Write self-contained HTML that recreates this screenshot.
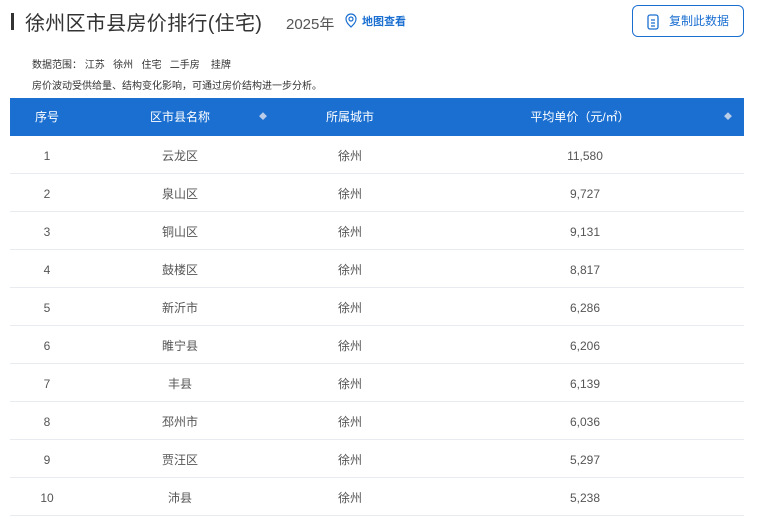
<!DOCTYPE html>
<html><head><meta charset="utf-8"><style>
*{margin:0;padding:0;box-sizing:border-box}
body{width:761px;height:531px;background:#fff;font-family:"Liberation Sans","Noto Sans CJK SC",sans-serif;position:relative;overflow:hidden;color:#333}
.bar{position:absolute;left:11px;top:13px;width:3px;height:17px;background:#333}
.title{position:absolute;left:25px;top:7px;font-size:20px;color:#333;white-space:nowrap;letter-spacing:0.3px}
.year{position:absolute;left:286px;top:13px;font-size:15px;color:#555}
.map{position:absolute;left:343px;top:13px;font-size:11px;color:#1a6fd1;font-weight:bold}
.map svg{vertical-align:-4px;margin-right:3px}
.copy{position:absolute;left:632px;top:5px;width:112px;height:32px;border:1px solid #1a6fd1;border-radius:6px;font-size:12px;color:#1a6fd1;line-height:30px;padding-left:36px}
.copy svg{position:absolute;left:12px;top:7px}
.info{position:absolute;left:32px;font-size:10px;color:#333;white-space:nowrap}
.hdr{position:absolute;left:10px;top:98px;width:734px;height:38px;background:#1a6fd1;color:#fff;font-size:12px}
.hdr span,.row span{position:absolute;top:0;transform:translateX(-50%);white-space:nowrap}
.hdr span{line-height:38px}
.row{position:absolute;left:10px;width:734px;height:38px;border-bottom:1px solid #e8ebef;font-size:12px;color:#555}
.row span{line-height:40px}
.sort{font-size:8px;color:#b9cde8}
</style></head><body>
<div class="bar"></div>
<div class="title">徐州区市县房价排行(住宅)</div>
<div class="year">2025年</div>
<div class="map"><svg width="16" height="16" viewBox="0 0 16 16" fill="none" stroke="#1a6fd1" stroke-width="1.2"><path d="M8 14c-3-3-5-5-5-8a5 5 0 0 1 10 0c0 3-2 5-5 8z"/><circle cx="8" cy="6" r="2"/></svg>地图查看</div>
<div class="copy"><svg width="16" height="18" viewBox="0 0 16 18" fill="none" stroke="#1a6fd1" stroke-width="1.3"><rect x="3" y="2" width="10" height="14" rx="2"/><path d="M6 7h4M6 10h4M6 13h4"/></svg>复制此数据</div>
<div class="info" style="top:56px">数据范围：&nbsp;江苏&nbsp;&nbsp;&nbsp;徐州&nbsp;&nbsp;&nbsp;住宅&nbsp;&nbsp;&nbsp;二手房&nbsp;&nbsp;&nbsp;&nbsp;挂牌</div>
<div class="info" style="top:77px">房价波动受供给量、结构变化影响，可通过房价结构进一步分析。</div>
<div class="hdr">
<span style="left:37px">序号</span>
<span style="left:170px">区市县名称</span>
<span class="sort" style="left:253px">◆</span>
<span style="left:340px">所属城市</span>
<span style="left:570px">平均单价（元/㎡）</span>
<span class="sort" style="left:718px">◆</span>
</div>
<div class="row" style="top:136px"><span style="left:37px">1</span><span style="left:170px">云龙区</span><span style="left:340px">徐州</span><span style="left:575px">11,580</span></div>
<div class="row" style="top:174px"><span style="left:37px">2</span><span style="left:170px">泉山区</span><span style="left:340px">徐州</span><span style="left:575px">9,727</span></div>
<div class="row" style="top:212px"><span style="left:37px">3</span><span style="left:170px">铜山区</span><span style="left:340px">徐州</span><span style="left:575px">9,131</span></div>
<div class="row" style="top:250px"><span style="left:37px">4</span><span style="left:170px">鼓楼区</span><span style="left:340px">徐州</span><span style="left:575px">8,817</span></div>
<div class="row" style="top:288px"><span style="left:37px">5</span><span style="left:170px">新沂市</span><span style="left:340px">徐州</span><span style="left:575px">6,286</span></div>
<div class="row" style="top:326px"><span style="left:37px">6</span><span style="left:170px">睢宁县</span><span style="left:340px">徐州</span><span style="left:575px">6,206</span></div>
<div class="row" style="top:364px"><span style="left:37px">7</span><span style="left:170px">丰县</span><span style="left:340px">徐州</span><span style="left:575px">6,139</span></div>
<div class="row" style="top:402px"><span style="left:37px">8</span><span style="left:170px">邳州市</span><span style="left:340px">徐州</span><span style="left:575px">6,036</span></div>
<div class="row" style="top:440px"><span style="left:37px">9</span><span style="left:170px">贾汪区</span><span style="left:340px">徐州</span><span style="left:575px">5,297</span></div>
<div class="row" style="top:478px"><span style="left:37px">10</span><span style="left:170px">沛县</span><span style="left:340px">徐州</span><span style="left:575px">5,238</span></div>
</body></html>
